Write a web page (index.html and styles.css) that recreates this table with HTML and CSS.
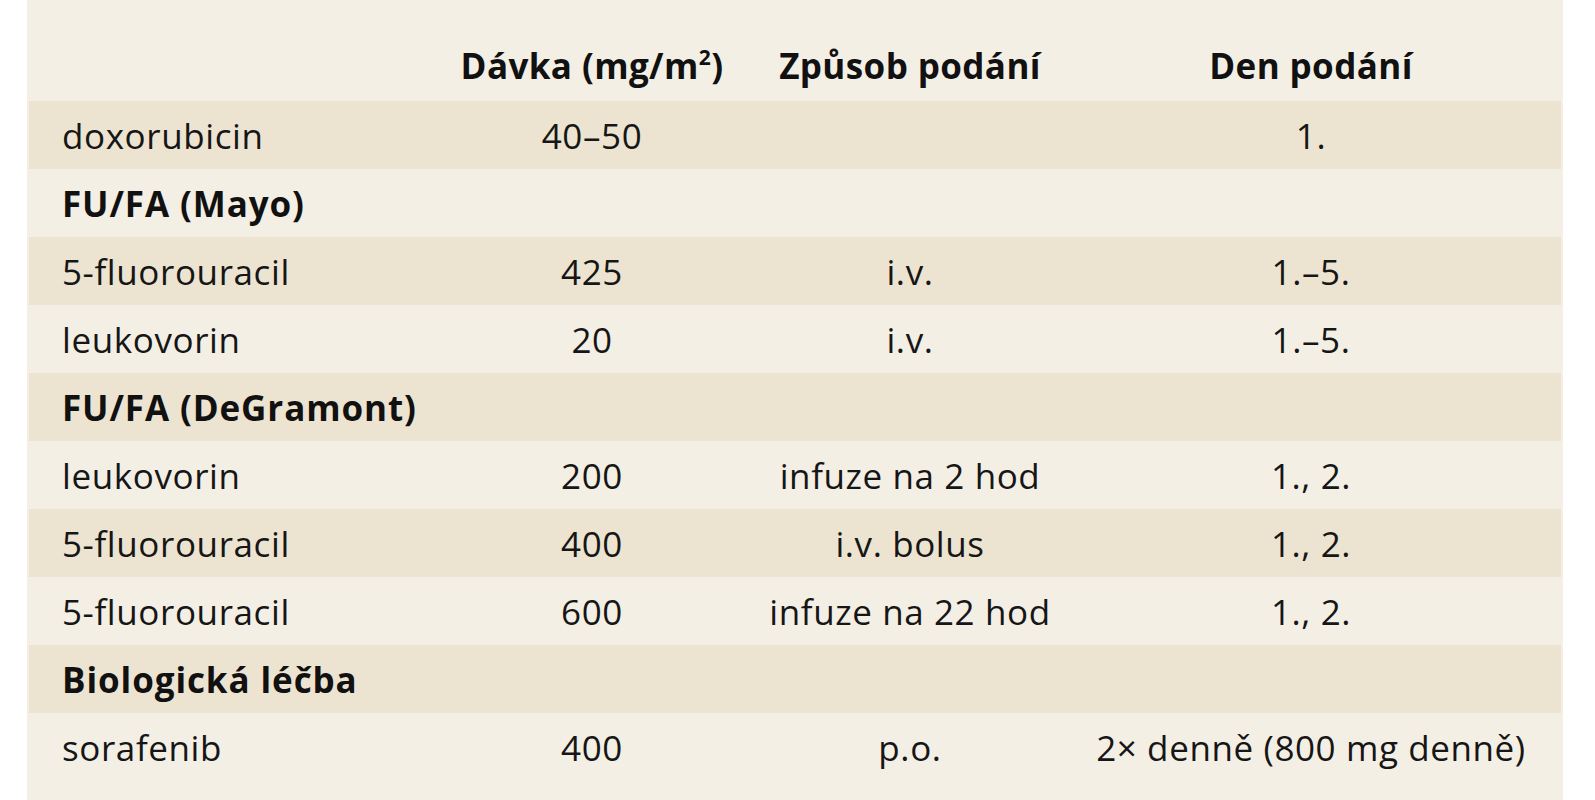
FILE: index.html
```html
<!DOCTYPE html>
<html lang="cs">
<head>
<meta charset="utf-8">
<title>Tabulka</title>
<link rel="stylesheet" href="styles.css">
</head>
<body>
<div class="panel">
<table class="tbl">
<colgroup>
<col class="c1"><col class="c2"><col class="c3"><col class="c4">
</colgroup>
<thead>
<tr><th class="name"></th><th>Dávka (mg/m<sup>2</sup>)</th><th>Způsob podání</th><th>Den podání</th></tr>
</thead>
<tbody>
<tr class="alt"><td class="name">doxorubicin</td><td>40–50</td><td></td><td>1.</td></tr>
<tr><td class="name grp">FU/FA (Mayo)</td><td></td><td></td><td></td></tr>
<tr class="alt"><td class="name">5-fluorouracil</td><td>425</td><td>i.v.</td><td>1.–5.</td></tr>
<tr><td class="name">leukovorin</td><td>20</td><td>i.v.</td><td>1.–5.</td></tr>
<tr class="alt"><td class="name grp">FU/FA (DeGramont)</td><td></td><td></td><td></td></tr>
<tr><td class="name">leukovorin</td><td>200</td><td>infuze na 2 hod</td><td>1., 2.</td></tr>
<tr class="alt"><td class="name">5-fluorouracil</td><td>400</td><td>i.v. bolus</td><td>1., 2.</td></tr>
<tr><td class="name">5-fluorouracil</td><td>600</td><td>infuze na 22 hod</td><td>1., 2.</td></tr>
<tr class="alt"><td class="name grp">Biologická léčba</td><td></td><td></td><td></td></tr>
<tr><td class="name">sorafenib</td><td>400</td><td>p.o.</td><td>2× denně (800 mg denně)</td></tr>
</tbody>
</table>
</div>
</body>
</html>
```
FILE: styles.css
```css
html, body {
  margin: 0;
  padding: 0;
  background: #ffffff;
}
body {
  font-family: "Open Sans", "Noto Sans", sans-serif;
  color: #161616;
}
.panel {
  margin-left: 27px;
  width: 1536px;
  height: 800px;
  box-sizing: border-box;
  padding: 0 2px;
  background: #f4efe4;
  overflow: hidden;
}
.tbl {
  width: 1532px;
  table-layout: fixed;
  border-collapse: collapse;
  font-size: 35px;
  letter-spacing: 0.6px;
}
.c1 { width: 396px; }
.c2 { width: 334px; }
.c3 { width: 302px; }
.c4 { width: 500px; }
.tbl th {
  height: 101px;
  box-sizing: border-box;
  vertical-align: bottom;
  padding: 0 0 12px;
  font-weight: 700;
  text-align: center;
  color: #111;
  white-space: nowrap;
  letter-spacing: 0.4px;
}
.tbl th sup {
  font-size: 0.6em;
  line-height: 0;
  vertical-align: 0.65em;
}
.tbl td {
  height: 68px;
  box-sizing: border-box;
  padding: 0;
  text-align: center;
  vertical-align: middle;
  white-space: nowrap;
}
.tbl td.name {
  text-align: left;
  padding-left: 33px;
}
.tbl td.grp {
  font-weight: 700;
  color: #111;
  letter-spacing: 0.9px;
}
.tbl tr.alt td {
  background: #ece4d0;
}
```
